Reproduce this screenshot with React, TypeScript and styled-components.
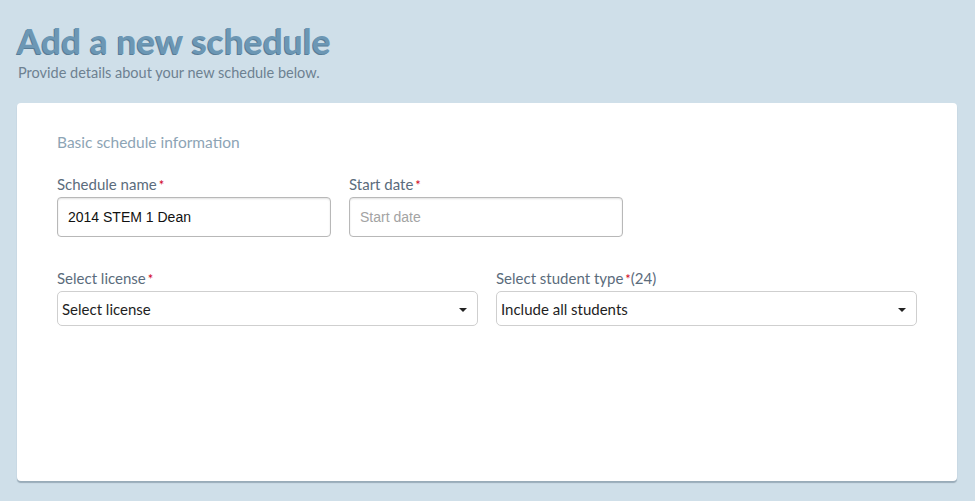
import React from "react";
import styled, { createGlobalStyle } from "styled-components";

const GlobalStyle = createGlobalStyle`
  html, body {
    margin: 0;
    padding: 0;
    background: #cfdfe9;
  }
  body {
    font-family: Lato, "Open Sans", sans-serif;
  }
`;

const Page = styled.div`
  width: 975px;
  height: 501px;
  box-sizing: border-box;
  padding: 19px 18px 0 17px;
`;

const Header = styled.header`
  margin-bottom: 21px;
`;

const Title = styled.h1`
  margin: 0;
  font-family: Lato, sans-serif;
  font-weight: 700;
  font-size: 35px;
  line-height: 42px;
  letter-spacing: 0.2px;
  color: #6c97b4;
  text-shadow: -1px 1px 0 #587d97;
`;

const Subtitle = styled.p`
  margin: 3px 0 0 1px;
  font-size: 14.5px;
  line-height: 18px;
  color: #6d8191;
`;

const Card = styled.section`
  height: 378px;
  box-sizing: border-box;
  background: #fff;
  border-radius: 4px;
  box-shadow: 0 2px 1px rgba(110, 130, 145, 0.55);
  padding: 30px 40px;
`;

const SectionTitle = styled.h2`
  margin: 0 0 24px;
  font-weight: 400;
  font-size: 15.5px;
  color: #8da4b5;
`;

interface RowProps {
  $cols: string;
  $gap: number;
}
const Row = styled.div<RowProps>`
  display: grid;
  grid-template-columns: ${(p) => p.$cols};
  column-gap: ${(p) => p.$gap}px;
  margin-bottom: 32px;
`;

const Field = styled.div`
  display: flex;
  flex-direction: column;
`;

const Label = styled.label`
  font-size: 15px;
  color: #5b6c7c;
  margin-bottom: 3px;
  line-height: 18px;

  .req {
    color: #d0021b;
    margin-left: 2px;
    font-size: 13px;
  }
`;

const TextInput = styled.input`
  box-sizing: border-box;
  height: 40px;
  width: 100%;
  border: 1px solid #b8b8b8;
  border-radius: 4px;
  box-shadow: inset 0 1px 2px rgba(0, 0, 0, 0.12);
  padding: 0 10px;
  font-family: "Liberation Sans", Arial, sans-serif;
  font-size: 14px;
  color: #111;
  outline: none;

  &::placeholder {
    color: #a3a3a3;
  }
`;

const SelectBox = styled.div`
  box-sizing: border-box;
  height: 35px;
  border: 1px solid #cfcfcf;
  border-radius: 5px;
  display: flex;
  align-items: center;
  justify-content: space-between;
  padding: 0 10px 0 4px;
  font-size: 15px;
  color: #1e1e1e;
`;

const Caret = styled.span`
  width: 0;
  height: 0;
  border-left: 4px solid transparent;
  border-right: 4px solid transparent;
  border-top: 4px solid #222;
  margin-top: 2px;
`;

export default function App() {
  return (
    <>
      <GlobalStyle />
      <Page>
        <Header>
          <Title>Add a new schedule</Title>
          <Subtitle>Provide details about your new schedule below.</Subtitle>
        </Header>
        <Card>
          <SectionTitle>Basic schedule information</SectionTitle>
          <Row $cols="274px 274px" $gap={18}>
            <Field>
              <Label>Schedule name<span className="req">*</span></Label>
              <TextInput defaultValue="2014 STEM 1 Dean" />
            </Field>
            <Field>
              <Label>Start date<span className="req">*</span></Label>
              <TextInput placeholder="Start date" />
            </Field>
          </Row>
          <Row $cols="1fr 1fr" $gap={18}>
            <Field>
              <Label>Select license<span className="req">*</span></Label>
              <SelectBox>
                <span>Select license</span>
                <Caret />
              </SelectBox>
            </Field>
            <Field>
              <Label>Select student type<span className="req">*</span>(24)</Label>
              <SelectBox>
                <span>Include all students</span>
                <Caret />
              </SelectBox>
            </Field>
          </Row>
        </Card>
      </Page>
    </>
  );
}
